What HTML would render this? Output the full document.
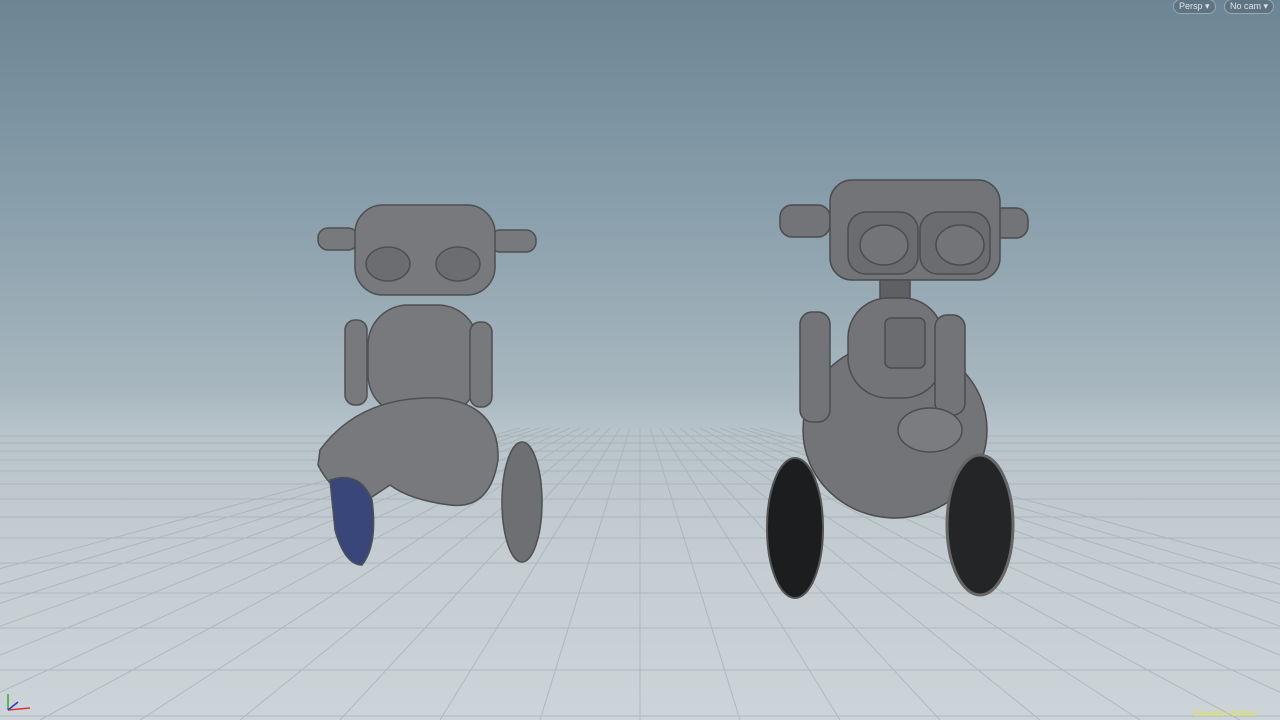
<!DOCTYPE html><html><head><meta charset="utf-8"><style>
html,body{margin:0;width:1280px;height:720px;overflow:hidden;font-family:"Liberation Sans",sans-serif}
.bg{position:absolute;inset:0;background:linear-gradient(#6c8594 0%,#8aa0ac 30%,#a9b8c0 55%,#b8c4ca 60%,#c3ccd1 75%,#cdd4d8 100%)}
.btn{position:absolute;top:-1px;height:13px;border:1px solid #9aa9b2;border-radius:8px;background:#5e7482;color:#dfe5e9;font-size:9px;line-height:13px;padding:0 5px;white-space:nowrap}
</style></head><body><div class="bg"></div>
<svg width="1280" height="720" style="position:absolute;left:0;top:0">
<g stroke="#a3aeb4" stroke-width="1" fill="none" opacity="0.7">
<line x1="0" y1="436" x2="1280" y2="436"/><line x1="0" y1="443" x2="1280" y2="443"/><line x1="0" y1="451" x2="1280" y2="451"/><line x1="0" y1="460" x2="1280" y2="460"/><line x1="0" y1="471" x2="1280" y2="471"/><line x1="0" y1="484" x2="1280" y2="484"/><line x1="0" y1="499" x2="1280" y2="499"/><line x1="0" y1="517" x2="1280" y2="517"/><line x1="0" y1="538" x2="1280" y2="538"/><line x1="0" y1="563" x2="1280" y2="563"/><line x1="0" y1="593" x2="1280" y2="593"/><line x1="0" y1="628" x2="1280" y2="628"/><line x1="0" y1="670" x2="1280" y2="670"/><line x1="0" y1="716" x2="1280" y2="716"/>
<line x1="520" y1="428" x2="-560" y2="720"/><line x1="530" y1="428" x2="-460" y2="720"/><line x1="540" y1="428" x2="-360" y2="720"/><line x1="550" y1="428" x2="-260" y2="720"/><line x1="560" y1="428" x2="-160" y2="720"/><line x1="570" y1="428" x2="-60" y2="720"/><line x1="580" y1="428" x2="40" y2="720"/><line x1="590" y1="428" x2="140" y2="720"/><line x1="600" y1="428" x2="240" y2="720"/><line x1="610" y1="428" x2="340" y2="720"/><line x1="620" y1="428" x2="440" y2="720"/><line x1="630" y1="428" x2="540" y2="720"/><line x1="640" y1="428" x2="640" y2="720"/><line x1="650" y1="428" x2="740" y2="720"/><line x1="660" y1="428" x2="840" y2="720"/><line x1="670" y1="428" x2="940" y2="720"/><line x1="680" y1="428" x2="1040" y2="720"/><line x1="690" y1="428" x2="1140" y2="720"/><line x1="700" y1="428" x2="1240" y2="720"/><line x1="710" y1="428" x2="1340" y2="720"/><line x1="720" y1="428" x2="1440" y2="720"/><line x1="730" y1="428" x2="1540" y2="720"/><line x1="740" y1="428" x2="1640" y2="720"/><line x1="750" y1="428" x2="1740" y2="720"/><line x1="760" y1="428" x2="1840" y2="720"/>
</g>
<g fill="#77797c" stroke="#4e5052" stroke-width="1.5">
<rect x="318" y="228" width="40" height="22" rx="10"/><rect x="490" y="230" width="46" height="22" rx="10"/>
<rect x="355" y="205" width="140" height="90" rx="28"/>
<ellipse cx="388" cy="264" rx="22" ry="17" fill="#6b6d70"/><ellipse cx="458" cy="264" rx="22" ry="17" fill="#6b6d70"/>
<rect x="368" y="305" width="110" height="110" rx="40"/>
<rect x="345" y="320" width="22" height="85" rx="10"/><rect x="470" y="322" width="22" height="85" rx="10"/>
<path d="M320 450 Q360 395 440 398 Q500 405 498 460 Q490 510 450 505 Q410 500 390 485 L360 505 Q330 490 318 465Z"/>
<path d="M330 480 Q360 470 372 500 Q378 545 362 565 Q345 565 335 530Z" fill="#39467a"/>
<ellipse cx="522" cy="502" rx="20" ry="60" fill="#6d6f72"/>
</g>
<g fill="#727477" stroke="#4a4c4e" stroke-width="1.5">
<rect x="780" y="205" width="50" height="32" rx="12"/><rect x="990" y="208" width="38" height="30" rx="12"/>
<rect x="830" y="180" width="170" height="100" rx="22"/>
<rect x="848" y="212" width="70" height="62" rx="18" fill="#6a6c6f"/><rect x="920" y="212" width="70" height="62" rx="18" fill="#6a6c6f"/>
<ellipse cx="884" cy="245" rx="24" ry="20"/><ellipse cx="960" cy="245" rx="24" ry="20"/>
<rect x="880" y="280" width="30" height="22" fill="#5e6063"/>
<ellipse cx="895" cy="430" rx="92" ry="88"/>
<rect x="848" y="298" width="95" height="100" rx="40"/>
<rect x="885" y="318" width="40" height="50" rx="6" fill="#6a6c6f"/>
<rect x="800" y="312" width="30" height="110" rx="12"/><rect x="935" y="315" width="30" height="100" rx="12"/>
<ellipse cx="930" cy="430" rx="32" ry="22" fill="#7a7c7f"/>
</g>
<ellipse cx="795" cy="528" rx="28" ry="70" fill="#1c1d1f" stroke="#555" stroke-width="2"/>
<ellipse cx="980" cy="525" rx="33" ry="70" fill="#242527" stroke="#666" stroke-width="3"/>
<g stroke-width="1.5"><line x1="8" y1="710" x2="30" y2="708" stroke="#d33"/><line x1="8" y1="710" x2="8" y2="694" stroke="#3a3"/><line x1="8" y1="710" x2="18" y2="702" stroke="#33c"/></g>
</svg>
<div class="btn" style="left:1173px">Persp ▾</div>
<div class="btn" style="left:1224px">No cam ▾</div>
<div style="position:absolute;left:1194px;top:709px;font-size:8px;color:#e3e24c;white-space:nowrap">Education Edition</div>
</body></html>
